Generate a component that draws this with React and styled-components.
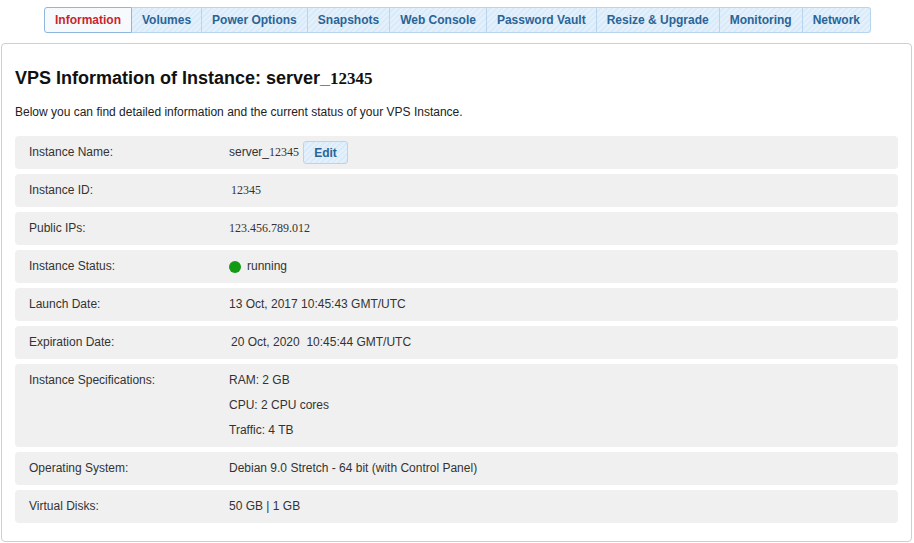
import React from "react";
import styled, { createGlobalStyle } from "styled-components";

const GlobalStyle = createGlobalStyle`
  body {
    margin: 0;
    background: #fff;
    font-family: "Liberation Sans", Arial, sans-serif;
    color: #333;
  }
`;

const stripes = `repeating-linear-gradient(
  135deg,
  #e4f0fb 0px,
  #e4f0fb 2px,
  #d9eaf8 2px,
  #d9eaf8 4px
)`;

const Page = styled.div`
  padding: 7px 2px 2px 1px;
`;

const Tabs = styled.nav`
  display: flex;
  justify-content: center;
  padding-left: 2px;
`;

const Tab = styled.a`
  display: flex;
  align-items: center;
  height: 26px;
  padding: 0 10px;
  box-sizing: border-box;
  font-size: 12px;
  font-weight: bold;
  text-decoration: none;
  cursor: pointer;
  border: 1px solid #b9d5ee;
  border-left-width: ${(p) => (p.$first ? "1px" : "0")};
  color: ${(p) => (p.$active ? "#c9252c" : "#2a6496")};
  background: ${(p) => (p.$active ? "#f7fafd" : stripes)};
  border-color: ${(p) => (p.$active ? "#8fb6dc" : "#b9d5ee")};
  &:first-child {
    border-radius: 3px 0 0 3px;
  }
  &:last-child {
    border-radius: 0 3px 3px 0;
  }
`;

const Panel = styled.section`
  margin-top: 10px;
  border: 1px solid #cfcfcf;
  border-radius: 4px;
  padding: 24px 13px 18px 13px;
`;

const Title = styled.h2`
  margin: 0;
  font-size: 18px;
  line-height: 21px;
  font-weight: bold;
  color: #111;
`;

const Serif = styled.span`
  font-family: "Liberation Serif", "Times New Roman", serif;
  font-size: ${(p) => p.$size || "inherit"};
`;

const Intro = styled.p`
  margin: 16px 0 16px;
  font-size: 12px;
  line-height: 15px;
  color: #222;
`;

const Rows = styled.div`
  display: flex;
  flex-direction: column;
  gap: 5px;
`;

const Row = styled.div`
  display: flex;
  align-items: ${(p) => (p.$tall ? "flex-start" : "center")};
  min-height: 33px;
  box-sizing: border-box;
  padding: ${(p) => (p.$tall ? "7px 14px 7px" : "0 14px")};
  background: #f0f0f0;
  border-radius: 4px;
  font-size: 12px;
  line-height: 19px;
  color: #333;
`;

const Label = styled.div`
  width: 200px;
  flex-shrink: 0;
`;

const Value = styled.div`
  display: flex;
  align-items: center;
  white-space: pre;
  padding-left: ${(p) => p.$indent || 0}px;
`;

const Lines = styled.div`
  display: flex;
  flex-direction: column;
  gap: 6px;
`;

const EditButton = styled.button`
  margin-left: 4px;
  height: 23px;
  width: 45px;
  padding: 0;
  border: 1px solid #b9d5ee;
  border-radius: 3px;
  background: ${stripes};
  color: #2a6496;
  font-family: "Liberation Sans", Arial, sans-serif;
  font-size: 12px;
  font-weight: bold;
  cursor: pointer;
`;

const Dot = styled.span`
  display: inline-block;
  width: 12px;
  height: 12px;
  border-radius: 50%;
  background: #169a16;
  margin-right: 6px;
`;

const tabs = [
  "Information",
  "Volumes",
  "Power Options",
  "Snapshots",
  "Web Console",
  "Password Vault",
  "Resize & Upgrade",
  "Monitoring",
  "Network",
];

export default function App() {
  return (
    <Page>
      <GlobalStyle />
      <Tabs>
        {tabs.map((t, i) => (
          <Tab key={t} $first={i === 0} $active={i === 0}>
            {t}
          </Tab>
        ))}
      </Tabs>
      <Panel>
        <Title>
          VPS Information of Instance: server_
          <Serif $size="17px">12345</Serif>
        </Title>
        <Intro>
          Below you can find detailed information and the current status of
          your VPS Instance.
        </Intro>
        <Rows>
          <Row>
            <Label>Instance Name:</Label>
            <Value>
              server_<Serif>12345</Serif>
              <EditButton>Edit</EditButton>
            </Value>
          </Row>
          <Row>
            <Label>Instance ID:</Label>
            <Value $indent={2}>
              <Serif>12345</Serif>
            </Value>
          </Row>
          <Row>
            <Label>Public IPs:</Label>
            <Value>
              <Serif>123.456.789.012</Serif>
            </Value>
          </Row>
          <Row>
            <Label>Instance Status:</Label>
            <Value>
              <Dot />
              running
            </Value>
          </Row>
          <Row>
            <Label>Launch Date:</Label>
            <Value>13 Oct, 2017 10:45:43 GMT/UTC</Value>
          </Row>
          <Row>
            <Label>Expiration Date:</Label>
            <Value $indent={2}>20 Oct, 2020  10:45:44 GMT/UTC</Value>
          </Row>
          <Row $tall>
            <Label>Instance Specifications:</Label>
            <Lines>
              <div>RAM: 2 GB</div>
              <div>CPU: 2 CPU cores</div>
              <div>Traffic: 4 TB</div>
            </Lines>
          </Row>
          <Row>
            <Label>Operating System:</Label>
            <Value>Debian 9.0 Stretch - 64 bit (with Control Panel)</Value>
          </Row>
          <Row>
            <Label>Virtual Disks:</Label>
            <Value>50 GB | 1 GB</Value>
          </Row>
        </Rows>
      </Panel>
    </Page>
  );
}
